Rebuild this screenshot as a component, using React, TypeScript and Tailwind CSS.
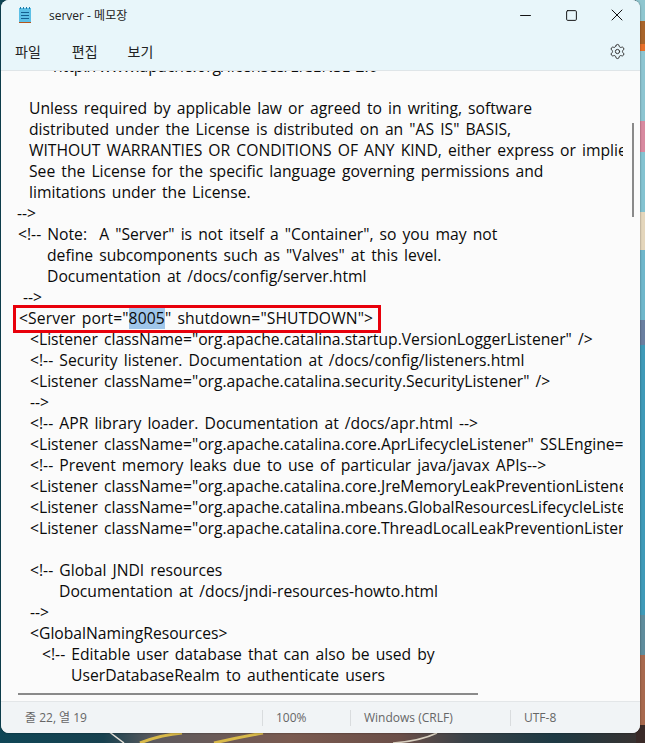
import { Minus, Settings, Square, X } from 'lucide-react';

const FONT = "font-['Open_Sans','Noto_Sans_CJK_KR',sans-serif]";

const lines: { pad: number; text: string; mark?: boolean }[] = [
  { pad: 52, text: 'http://www.apache.org/licenses/LICENSE-2.0' },
  { pad: 0, text: '' },
  { pad: 28, text: 'Unless required by applicable law or agreed to in writing, software' },
  { pad: 28, text: 'distributed under the License is distributed on an "AS IS" BASIS,' },
  { pad: 28, text: 'WITHOUT WARRANTIES OR CONDITIONS OF ANY KIND, either express or implied.' },
  { pad: 28, text: 'See the License for the specific language governing permissions and' },
  { pad: 28, text: 'limitations under the License.' },
  { pad: 16, text: '-->' },
  { pad: 17, text: '<!-- Note:  A "Server" is not itself a "Container", so you may not' },
  { pad: 46, text: 'define subcomponents such as "Valves" at this level.' },
  { pad: 46, text: 'Documentation at /docs/config/server.html' },
  { pad: 22, text: '-->' },
  { pad: 18, text: '', mark: true },
  { pad: 29, text: '<Listener className="org.apache.catalina.startup.VersionLoggerListener" />' },
  { pad: 29, text: '<!-- Security listener. Documentation at /docs/config/listeners.html' },
  { pad: 29, text: '<Listener className="org.apache.catalina.security.SecurityListener" />' },
  { pad: 29, text: '-->' },
  { pad: 29, text: '<!-- APR library loader. Documentation at /docs/apr.html -->' },
  { pad: 29, text: '<Listener className="org.apache.catalina.core.AprLifecycleListener" SSLEngine="on" />' },
  { pad: 29, text: '<!-- Prevent memory leaks due to use of particular java/javax APIs-->' },
  { pad: 29, text: '<Listener className="org.apache.catalina.core.JreMemoryLeakPreventionListener" />' },
  { pad: 29, text: '<Listener className="org.apache.catalina.mbeans.GlobalResourcesLifecycleListener" />' },
  { pad: 29, text: '<Listener className="org.apache.catalina.core.ThreadLocalLeakPreventionListener" />' },
  { pad: 0, text: '' },
  { pad: 29, text: '<!-- Global JNDI resources' },
  { pad: 58, text: 'Documentation at /docs/jndi-resources-howto.html' },
  { pad: 29, text: '-->' },
  { pad: 29, text: '<GlobalNamingResources>' },
  { pad: 41, text: '<!-- Editable user database that can also be used by' },
  { pad: 70, text: 'UserDatabaseRealm to authenticate users' },
];

function NotepadIcon() {
  return (
    <svg width="12" height="16" viewBox="0 0 12 16" className="shrink-0">
      <rect x="0" y="1" width="12" height="14" fill="#5cc0e6" />
      <rect x="0" y="15" width="12" height="1" fill="#b5561c" />
      <path d="M2 5.5h8M2 8.5h8M2 11.5h8" stroke="#14608f" strokeWidth="1" />
      <path d="M1.5 0v2M4.5 0v2M7.5 0v2M10.5 0v2" stroke="#1f7ba8" strokeWidth="1" />
    </svg>
  );
}

// 背景の壁紙（ウィンドウの外に見える部分）
function Wallpaper() {
  return (
    <svg width="645" height="743" viewBox="0 0 645 743" className="absolute inset-0">
      <defs>
        <linearGradient id="floor" x1="0" y1="0" x2="1" y2="0">
          <stop offset="0" stopColor="#0f4656" />
          <stop offset="0.16" stopColor="#17414f" />
          <stop offset="0.24" stopColor="#5d5a5e" />
          <stop offset="0.45" stopColor="#7a5a50" />
          <stop offset="0.62" stopColor="#6b4f48" />
          <stop offset="0.72" stopColor="#3a4248" />
          <stop offset="0.86" stopColor="#1e3a44" />
          <stop offset="1" stopColor="#3a3230" />
        </linearGradient>
      </defs>
      <rect width="645" height="743" fill="#0f4656" />
      <rect y="728" width="645" height="15" fill="url(#floor)" />
      <rect x="636" y="0" width="9" height="21" fill="#8fc6cf" />
      <rect x="636" y="21" width="9" height="23" fill="#a8642a" />
      <rect x="636" y="44" width="9" height="7" fill="#e8702a" />
      <rect x="636" y="51" width="9" height="70" fill="#8dc5d1" />
      <rect x="636" y="121" width="9" height="31" fill="#d88aa0" />
      <rect x="636" y="152" width="9" height="60" fill="#84c3d1" />
      <rect x="636" y="212" width="9" height="38" fill="#e4d6bc" />
      <rect x="636" y="250" width="9" height="70" fill="#6fb7cb" />
      <rect x="636" y="320" width="9" height="25" fill="#6a7fa0" />
      <rect x="636" y="345" width="9" height="270" fill="#3f9ab8" />
      <rect x="636" y="615" width="9" height="40" fill="#5f8c9c" />
      <rect x="636" y="655" width="9" height="70" fill="#a8694e" />
      <rect x="636" y="725" width="9" height="18" fill="#3a2a28" />
      <path d="M108 731 L124 743" stroke="#e8e4dc" strokeWidth="1.5" />
      <path d="M140 743 Q160 735 182 733" stroke="#d8b94a" strokeWidth="3" fill="none" />
      <path d="M214 743 Q240 737 263 733" stroke="#d8b94a" strokeWidth="3" fill="none" />
      <path d="M393 743 Q420 741 437 733" stroke="#d8d0c0" strokeWidth="1.5" fill="none" />
    </svg>
  );
}

export default function App() {
  return (
    <div className={`relative h-[743px] w-[645px] overflow-hidden ${FONT}`}>
      <Wallpaper />
      <div className="relative ml-px flex h-[733px] w-[639px] flex-col overflow-hidden rounded-lg bg-[#fbfbfb] shadow-[0_0_2px_rgba(0,0,0,0.5)]">
        {/* タイトルバー */}
        <div className="flex h-[30px] shrink-0 items-center bg-[#e8f6fa] pl-[18px]">
          <NotepadIcon />
          <span className="ml-[18px] pt-px text-xs text-[#222]">server - 메모장</span>
          <div className="ml-auto flex items-center text-[#111]">
            <span className="flex w-[46px] justify-center"><Minus size={17} strokeWidth={1.4} /></span>
            <span className="flex w-[46px] justify-center"><Square size={13} strokeWidth={1.8} /></span>
            <span className="flex w-[46px] justify-center"><X size={20} strokeWidth={1.2} /></span>
          </div>
        </div>
        {/* メニュー */}
        <div className="flex h-[41px] shrink-0 items-center border-b border-[#dfe5e8] bg-[#e8f6fa] pl-[14px] pt-[3px] text-sm text-[#222]">
          <span>파일</span>
          <span className="ml-[31px]">편집</span>
          <span className="ml-[30px]">보기</span>
          <Settings size={17} strokeWidth={1.4} className="ml-auto mr-[14px] text-[#333]" />
        </div>
        {/* 本文 */}
        <div className="relative flex-1 overflow-hidden">
          <div className="-mt-[15px] mr-[17px] overflow-hidden text-[15.7px] leading-[21px] text-[#0a0a0a] [word-spacing:2px]">
            {lines.map((l, i) => (
              <div key={i} className="h-[21px] whitespace-pre" style={{ paddingLeft: l.pad }}>
                {l.mark ? (
                  <span className="tracking-[0.1px]">
                    &lt;Server port="<span className="bg-[#9fc6ea]">8005</span>" shutdown="SHUTDOWN"&gt;
                  </span>
                ) : (
                  l.text
                )}
              </div>
            ))}
          </div>
          <div className="absolute right-[6px] top-[52px] h-[94px] w-[2px] bg-[#8a8a8a]" />
          <div className="absolute bottom-[6px] left-[17px] h-[2px] w-[460px] bg-[#8a8a8a]" />
          {/* 赤枠 */}
          <div className="absolute left-[12px] top-[234px] h-[28px] w-[368px] border-[3px] border-[#e8000b]" />
        </div>
        {/* ステータスバー */}
        <div className="flex h-[32px] shrink-0 items-center border-t border-[#e3e6e8] bg-[#f1f4f6] text-xs text-[#666]">
          <span className="w-[261px] pl-[24px]">줄 22, 열 19</span>
          <span className="flex h-[16px] w-[88px] items-center border-l border-[#d9dcde] pl-[13px]">100%</span>
          <span className="flex h-[16px] w-[160px] items-center border-l border-[#d9dcde] pl-[13px]">Windows (CRLF)</span>
          <span className="flex h-[16px] items-center border-l border-[#d9dcde] pl-[13px]">UTF-8</span>
        </div>
      </div>
    </div>
  );
}
